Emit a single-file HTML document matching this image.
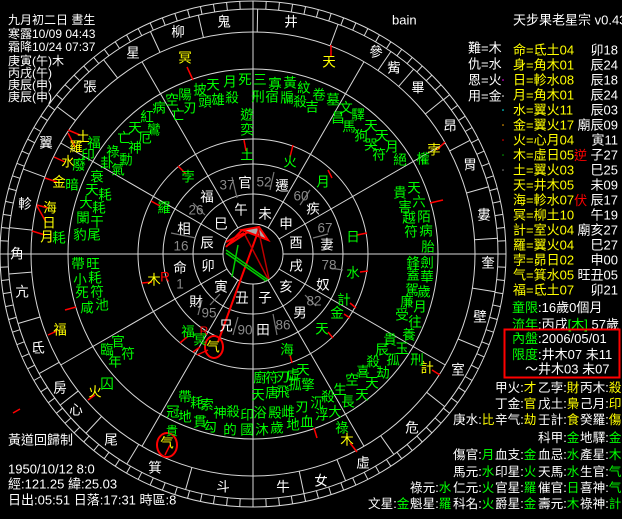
<!DOCTYPE html>
<html><head><meta charset="utf-8"><style>
html,body{margin:0;padding:0;background:#000;width:622px;height:519px;overflow:hidden}
svg{display:block}
text{font-family:"Liberation Sans","Noto Sans CJK TC","WenQuanYi Zen Hei",sans-serif;dominant-baseline:central}
.w{fill:#fff;font-size:13px}
.h{fill:#fff;font-size:12px}
.g{fill:#0f0;font-size:13.5px;text-anchor:middle}
.y{fill:#ff0;font-size:13.5px;text-anchor:middle}
.m{fill:#fff;font-size:13.5px;text-anchor:middle}
.n{fill:#8a8a8a;font-size:13.5px;text-anchor:middle}
.t{font-size:13px}
.t2{font-size:12.6px}
.yy{fill:#ff0}.gg{fill:#0f0}.rr{fill:#f00}.ww{fill:#fff}
</style></head><body>
<svg id="s" width="622" height="519" viewBox="0 0 622 519" xmlns="http://www.w3.org/2000/svg">
<g id="lines" stroke="#d8d8d8" stroke-width="1" fill="none">
<circle cx="253" cy="254" r="253"/>
<circle cx="253" cy="254" r="245"/>
<circle cx="253" cy="254" r="222"/>
<circle cx="253" cy="254" r="185"/>
<circle cx="253" cy="254" r="115"/>
<circle cx="253" cy="254" r="90"/>
<circle cx="253" cy="254" r="60"/>
<circle cx="253" cy="254" r="30"/>
</g>
<g stroke="#f00" stroke-width="1.5">
<line x1="187" y1="67" x2="193" y2="80"/>
<line x1="68" y1="130" x2="80" y2="135"/>
<line x1="68" y1="133" x2="75" y2="147"/>
<line x1="54" y1="157" x2="65" y2="162"/>
<line x1="45" y1="178" x2="57" y2="182"/>
<line x1="37" y1="205" x2="48" y2="208"/>
<line x1="37" y1="206" x2="46" y2="222"/>
<line x1="32" y1="231" x2="45" y2="235"/>
<line x1="178" y1="166" x2="186" y2="174"/>
<line x1="151" y1="201" x2="160" y2="206"/>
<line x1="244" y1="140" x2="246" y2="151"/>
<line x1="293" y1="145" x2="290" y2="157"/>
<line x1="331" y1="45" x2="331" y2="57"/>
<line x1="328" y1="170" x2="332" y2="178"/>
<line x1="357" y1="235" x2="367" y2="233"/>
<line x1="430" y1="203" x2="443" y2="200"/>
<line x1="437" y1="150" x2="445" y2="142"/>
<line x1="360" y1="272" x2="368" y2="271"/>
<line x1="350" y1="303" x2="356" y2="308"/>
<line x1="344" y1="314" x2="350" y2="318"/>
<line x1="328" y1="332" x2="333" y2="338"/>
<line x1="290" y1="355" x2="292" y2="363"/>
<line x1="432" y1="370" x2="440" y2="375"/>
<line x1="350" y1="443" x2="357" y2="452"/>
<line x1="314" y1="428" x2="317" y2="438"/>
<line x1="88" y1="400" x2="95" y2="395"/>
<line x1="48" y1="335" x2="57" y2="331"/>
<line x1="65" y1="310" x2="76" y2="307"/>
<line x1="142" y1="283" x2="152" y2="282"/>
<line x1="180" y1="343" x2="187" y2="337"/>
<line x1="193" y1="352" x2="200" y2="347"/>
<line x1="197" y1="355" x2="208" y2="350"/>
<line x1="165" y1="455" x2="170" y2="445"/>
<line x1="13" y1="413" x2="20" y2="409"/>
</g>
<g stroke="#777" stroke-width="1.2">
<line x1="232" y1="177" x2="237" y2="198"/>
<line x1="274" y1="172" x2="270" y2="190"/>
<line x1="193" y1="203" x2="205" y2="215"/>
<line x1="171" y1="233" x2="196" y2="238"/>
<line x1="310" y1="190" x2="300" y2="205"/>
<line x1="313" y1="238" x2="328" y2="234"/>
<line x1="305" y1="295" x2="316" y2="306"/>
<line x1="273" y1="314" x2="277" y2="335"/>
<line x1="238" y1="317" x2="233" y2="335"/>
<line x1="202" y1="300" x2="198" y2="315"/>
<line x1="330" y1="268" x2="343" y2="270"/>
<line x1="220" y1="294" x2="210" y2="305"/>
</g>
<polygon points="242,230 259,227 268,240" fill="#aaa" stroke="#f00" stroke-width="2"/>
<g stroke="#f00" stroke-width="2">
<line x1="242" y1="230" x2="226" y2="247"/>
<line x1="248" y1="232" x2="228" y2="245"/>
<line x1="244" y1="233" x2="226" y2="242"/>
<line x1="259" y1="229" x2="218" y2="342"/>
</g>
<g stroke="#b00" stroke-width="1.5">
<line x1="258" y1="228" x2="269" y2="279"/>
<line x1="245" y1="235" x2="268" y2="279"/>
</g>
<g stroke="#0c0" stroke-width="1.5">
<line x1="226" y1="250" x2="268" y2="280"/>
<line x1="226" y1="253" x2="266" y2="281"/>
<line x1="238" y1="245" x2="232" y2="277"/>
</g>
<ellipse cx="214" cy="347" rx="9" ry="11" fill="none" stroke="#f00" stroke-width="2"/>
<ellipse cx="167" cy="445" rx="10" ry="12" fill="none" stroke="#f00" stroke-width="2"/>

<g class="m">
<text x="224" y="22">鬼</text><text x="291" y="22">井</text><text x="376" y="52">參</text>
<text x="394" y="68">觜</text><text x="418" y="88">畢</text><text x="450" y="126">昂</text>
<text x="470" y="165">胃</text><text x="484" y="215">婁</text><text x="488" y="263">奎</text>
<text x="480" y="317">壁</text><text x="458" y="370">室</text><text x="412" y="428">危</text>
<text x="363" y="463">虛</text><text x="321" y="481">女</text><text x="283" y="487">牛</text>
<text x="223" y="487">斗</text><text x="155" y="468">箕</text><text x="111" y="440">尾</text>
<text x="76" y="410">心</text><text x="60" y="388">房</text><text x="38" y="348">氐</text>
<text x="22" y="292">亢</text><text x="17" y="254">角</text><text x="25" y="204">軫</text>
<text x="46" y="143">翼</text><text x="90" y="87">張</text><text x="133" y="53">星</text>
<text x="178" y="32">柳</text>
</g>
<g class="m">
<text x="241" y="210">午</text><text x="265" y="214">未</text><text x="286" y="224">申</text>
<text x="296" y="243">酉</text><text x="296" y="266">戌</text><text x="286" y="287">亥</text>
<text x="265" y="298">子</text><text x="242" y="298">丑</text><text x="221" y="287">寅</text>
<text x="208" y="266">卯</text><text x="207" y="243">辰</text><text x="221" y="224">巳</text>
<text x="245" y="183">官</text><text x="282" y="186">遷</text><text x="313" y="209">疾</text>
<text x="327" y="245">妻</text><text x="323" y="285">奴</text><text x="300" y="313">男</text>
<text x="263" y="330">田</text><text x="226" y="326">兄</text><text x="196" y="302">財</text>
<text x="180" y="268">命</text><text x="184" y="229">相</text><text x="207" y="197">福</text>
</g>
<g class="n">
<text x="227" y="185">37</text><text x="264" y="182">52</text><text x="301" y="196">60</text>
<text x="325" y="228">67</text><text x="329" y="265">78</text><text x="314" y="301">82</text>
<text x="283" y="325">86</text><text x="245" y="330">90</text><text x="209" y="313">95</text>
<text x="180" y="284">1</text><text x="181" y="246">16</text><text x="196" y="210">26</text>
</g>
<g class="y">
<text x="185" y="58">冥</text><text x="83" y="137">土</text><text x="76" y="147">羅</text>
<text x="68" y="162">水</text><text x="59" y="182">金</text><text x="50" y="208">海</text>
<text x="49" y="223">日</text><text x="47" y="237">月</text><text x="329" y="62">天</text>
<text x="434" y="150">孛</text><text x="427" y="368">計</text><text x="347" y="440">木</text>
<text x="154" y="280">木</text><text x="60" y="330">福</text><text x="95" y="392">火</text>
<text x="213" y="347">气</text><text x="167" y="443">气</text>
</g>
<text x="165" y="277" class="g" style="fill:#f00">R</text>
<text x="204" y="331" class="g" style="fill:#f00;font-size:12px">R</text>
<g class="g">
<text x="213" y="85">天</text><text x="230" y="82">月</text><text x="245" y="80">死</text>
<text x="200" y="90">披</text><text x="185" y="95">陽</text><text x="205" y="102">頭</text>
<text x="218" y="100">雄</text><text x="232" y="98">殺</text><text x="172" y="100">空</text>
<text x="190" y="108">刃</text><text x="178" y="115">亡</text><text x="159" y="108">病</text>
<text x="147" y="117">紅</text><text x="135" y="128">天</text><text x="154" y="130">鸞</text>
<text x="124" y="138">亡</text><text x="145" y="138">厄</text><text x="135" y="148">神</text>
<text x="113" y="152">祿</text><text x="126" y="160">勳</text><text x="107" y="163">卦</text>
<text x="118" y="170">氣</text><text x="94" y="143">福</text><text x="88" y="155">印</text>
<text x="79" y="165">廢</text><text x="72" y="185">暗</text><text x="97" y="177">衰</text>
<text x="92" y="190">天</text><text x="105" y="195">耗</text><text x="86" y="203">大</text>
<text x="99" y="208">耗</text><text x="83" y="218">闌</text><text x="97" y="222">干</text>
<text x="80" y="235">豹</text><text x="94" y="235">尾</text><text x="59" y="238">耗</text>
<text x="247" y="115">遊</text><text x="247" y="130">奕</text><text x="247" y="155">土</text>
<text x="290" y="162">火</text><text x="188" y="177">孛</text><text x="164" y="208">羅</text>
<text x="260" y="80">三</text><text x="275" y="84">寡</text><text x="290" y="83">黃</text>
<text x="304" y="88">紋</text><text x="319" y="95">卷</text><text x="258" y="97">刑</text>
<text x="272" y="97">宿</text><text x="287" y="98">牖</text><text x="300" y="102">殺</text>
<text x="312" y="107">吉</text>
<text x="333" y="100">墓</text><text x="346" y="108">文</text><text x="358" y="115">驛</text>
<text x="338" y="118">昌</text><text x="349" y="127">馬</text><text x="371" y="126">天</text>
<text x="361" y="136">狗</text><text x="382" y="136">天</text><text x="371" y="145">哭</text>
<text x="392" y="147">月</text><text x="379" y="155">符</text><text x="400" y="160">絕</text>
<text x="423" y="159">權</text><text x="323" y="182">月</text><text x="414" y="188">天</text>
<text x="400" y="193">貴</text><text x="419" y="202">六</text><text x="405" y="207">害</text>
<text x="424" y="217">陌</text><text x="409" y="218">越</text><text x="426" y="231">病</text>
<text x="411" y="232">符</text><text x="428" y="247">胎</text><text x="353" y="237">日</text>
<text x="413" y="263">鋒</text><text x="427" y="263">劍</text><text x="413" y="275">蓋</text>
<text x="427" y="277">華</text><text x="412" y="290">駕</text><text x="424" y="292">歲</text>
<text x="407" y="302">廉</text><text x="420" y="307">月</text><text x="402" y="315">受</text>
<text x="415" y="322">往</text><text x="409" y="335">養</text><text x="390" y="340">貴</text>
<text x="402" y="349">玉</text><text x="382" y="350">辰</text><text x="393" y="360">孤</text>
<text x="373" y="362">殺</text><text x="417" y="360">刑</text><text x="383" y="373">劫</text>
<text x="363" y="372">喜</text><text x="372" y="383">天</text><text x="352" y="380">空</text>
<text x="362" y="395">天</text><text x="340" y="390">生</text><text x="348" y="402">長</text>
<text x="328" y="397">殺</text><text x="335" y="412">大</text><text x="317" y="403">沉</text>
<text x="322" y="415">浮</text><text x="302" y="407">刃</text><text x="307" y="422">血</text>
<text x="293" y="425">地</text><text x="288" y="412">雌</text><text x="275" y="413">殿</text>
<text x="277" y="428">歲</text><text x="262" y="430">沐</text><text x="260" y="413">浴</text>
<text x="258" y="395">天</text><text x="272" y="393">唐</text><text x="283" y="392">飛</text>
<text x="295" y="385">孤</text><text x="308" y="385">擎</text><text x="260" y="378">廚</text>
<text x="272" y="378">符</text><text x="283" y="377">刃</text><text x="293" y="375">虛</text>
<text x="303" y="370">天</text><text x="342" y="428">祿</text>
<text x="353" y="273">水</text><text x="344" y="300">計</text><text x="337" y="313">金</text>
<text x="322" y="329">天</text><text x="287" y="350">海</text>
<text x="78" y="264">帶</text><text x="93" y="264">旺</text><text x="80" y="280">小</text>
<text x="95" y="278">耗</text><text x="82" y="293">死</text><text x="97" y="292">符</text>
<text x="87" y="308">咸</text><text x="102" y="305">池</text>
<text x="118" y="342">官</text><text x="107" y="350">臨</text><text x="128" y="354">符</text>
<text x="115" y="362">年</text><text x="107" y="384">囚</text>
<text x="188" y="332">福</text><text x="200" y="340">冥</text>
<text x="185" y="397">帶</text><text x="173" y="412">冠</text><text x="197" y="403">耗</text>
<text x="185" y="417">地</text><text x="207" y="405">索</text><text x="200" y="422">貫</text>
<text x="220" y="413">神</text><text x="210" y="427">勾</text><text x="233" y="412">殺</text>
<text x="230" y="430">的</text><text x="247" y="415">印</text><text x="247" y="430">國</text>
<text x="172" y="431" style="font-size:12px">貴</text>
</g>

<g class="h">
<text x="8" y="20">九月初二日 晝生</text>
<text x="8" y="34">寒露10/09 04:43</text>
<text x="8" y="47">霜降10/24 07:37</text>
<text x="8" y="61">庚寅(午)木</text>
<text x="8" y="73">丙戌(午)</text>
<text x="8" y="85">庚辰(申)</text>
<text x="8" y="97">庚辰(申)</text>
</g>
<g class="w">
<text x="8" y="440">黃道回歸制</text>
<text x="8" y="469">1950/10/12 8:0</text>
<text x="8" y="484">經:121.25 緯:25.03</text>
<text x="8" y="500">日出:05:51 日落:17:31 時區:8</text>
<text x="392" y="20">bain</text>
<text x="513" y="20">天步果老星宗 v0.43</text>
<text x="468" y="48">難=木</text>
<text x="468" y="64">仇=水</text>
<text x="468" y="80">恩=火</text>
<text x="468" y="96">用=金</text>
</g>
<g>
<circle cx="503" cy="80" r="0.8" fill="#f0f"/><circle cx="503" cy="96" r="0.8" fill="#fff"/>
<circle cx="503" cy="110" r="0.8" fill="#0ff"/><circle cx="503" cy="125" r="0.8" fill="#fa0"/>
<circle cx="503" cy="140" r="0.8" fill="#f00"/><circle cx="503" cy="155" r="0.8" fill="#0a0"/>
<circle cx="503" cy="170" r="0.8" fill="#888"/>
</g>
<g class="t">
<text x="513" y="50" class="yy">命=氐土04</text><text x="618" y="50" class="ww" text-anchor="end">卯18</text>
<text x="513" y="65" class="yy">身=角木01</text><text x="618" y="65" class="ww" text-anchor="end">辰24</text>
<text x="513" y="80" class="yy">日=軫水08</text><text x="618" y="80" class="ww" text-anchor="end">辰18</text>
<text x="513" y="95" class="yy">月=角木01</text><text x="618" y="95" class="ww" text-anchor="end">辰24</text>
<text x="513" y="110" class="yy">水=翼火11</text><text x="618" y="110" class="ww" text-anchor="end">辰03</text>
<text x="513" y="125" class="yy">金=翼火17</text><text x="618" y="125" class="ww" text-anchor="end">廟辰09</text>
<text x="513" y="140" class="yy">火=心月04</text><text x="618" y="140" class="ww" text-anchor="end">寅11</text>
<text x="513" y="155" class="yy">木=虛日05<tspan class="rr">逆</tspan></text><text x="618" y="155" class="ww" text-anchor="end">子27</text>
<text x="513" y="170" class="yy">土=翼火03</text><text x="618" y="170" class="ww" text-anchor="end">巳25</text>
<text x="513" y="185" class="yy">天=井木05</text><text x="618" y="185" class="ww" text-anchor="end">未09</text>
<text x="513" y="200" class="yy">海=軫水07<tspan class="rr">伏</tspan></text><text x="618" y="200" class="ww" text-anchor="end">辰17</text>
<text x="513" y="215" class="yy">冥=柳土10</text><text x="618" y="215" class="ww" text-anchor="end">午19</text>
<text x="513" y="230" class="yy">計=室火04</text><text x="618" y="230" class="ww" text-anchor="end">廟亥27</text>
<text x="513" y="245" class="yy">羅=翼火04</text><text x="618" y="245" class="ww" text-anchor="end">巳27</text>
<text x="513" y="260" class="yy">孛=昴日02</text><text x="618" y="260" class="ww" text-anchor="end">申00</text>
<text x="513" y="275" class="yy">气=箕水05</text><text x="618" y="275" class="ww" text-anchor="end">旺丑05</text>
<text x="513" y="290" class="yy">福=氐土07</text><text x="618" y="290" class="ww" text-anchor="end">卯21</text>
<text x="512" y="307"><tspan class="gg">童限</tspan><tspan class="ww">:16歲0個月</tspan></text>
<text x="512" y="324"><tspan class="gg">流年</tspan><tspan class="ww">:丙戌</tspan><tspan class="gg">[木]</tspan><tspan class="ww">  57歲</tspan></text>
<text x="512" y="338"><tspan class="gg">內盤</tspan><tspan class="ww">:2006/05/01</tspan></text>
<text x="512" y="354"><tspan class="gg">限度</tspan><tspan class="ww">:井木07  未11</tspan></text>
<text x="525" y="369" class="ww">～井木03  未07</text>
</g>
<rect x="504.5" y="329.5" width="115" height="48" fill="none" stroke="#f00" stroke-width="2"/>
<g class="t2">
<text x="495" y="388"><tspan class="ww">甲火:</tspan><tspan class="yy">才</tspan></text>
<text x="538" y="388"><tspan class="ww">乙孛:</tspan><tspan class="yy">財</tspan></text>
<text x="580" y="388"><tspan class="ww">丙木:</tspan><tspan class="yy">殺</tspan></text>
<text x="495" y="404"><tspan class="ww">丁金:</tspan><tspan class="yy">官</tspan></text>
<text x="538" y="404"><tspan class="ww">戊土:</tspan><tspan class="yy">梟</tspan></text>
<text x="580" y="404"><tspan class="ww">己月:</tspan><tspan class="yy">印</tspan></text>
<text x="453" y="420"><tspan class="ww">庚水:</tspan><tspan class="yy">比</tspan></text>
<text x="495" y="420"><tspan class="ww">辛气:</tspan><tspan class="yy">劫</tspan></text>
<text x="538" y="420"><tspan class="ww">壬計:</tspan><tspan class="yy">食</tspan></text>
<text x="580" y="420"><tspan class="ww">癸羅:</tspan><tspan class="yy">傷</tspan></text>
<text x="538" y="438"><tspan class="ww">科甲:</tspan><tspan class="gg">金</tspan></text>
<text x="580" y="438"><tspan class="ww">地驛:</tspan><tspan class="gg">金</tspan></text>
<text x="453" y="455"><tspan class="ww">傷官:</tspan><tspan class="gg">月</tspan></text>
<text x="495" y="455"><tspan class="ww">血支:</tspan><tspan class="gg">金</tspan></text>
<text x="538" y="455"><tspan class="ww">血忌:</tspan><tspan class="gg">水</tspan></text>
<text x="580" y="455"><tspan class="ww">產星:</tspan><tspan class="gg">木</tspan></text>
<text x="453" y="472"><tspan class="ww">馬元:</tspan><tspan class="gg">水</tspan></text>
<text x="495" y="472"><tspan class="ww">印星:</tspan><tspan class="gg">火</tspan></text>
<text x="538" y="472"><tspan class="ww">天馬:</tspan><tspan class="gg">水</tspan></text>
<text x="580" y="472"><tspan class="ww">生官:</tspan><tspan class="gg">气</tspan></text>
<text x="410" y="488"><tspan class="ww">祿元:</tspan><tspan class="gg">水</tspan></text>
<text x="453" y="488"><tspan class="ww">仁元:</tspan><tspan class="gg">火</tspan></text>
<text x="495" y="488"><tspan class="ww">官星:</tspan><tspan class="gg">羅</tspan></text>
<text x="538" y="488"><tspan class="ww">催官:</tspan><tspan class="gg">日</tspan></text>
<text x="580" y="488"><tspan class="ww">喜神:</tspan><tspan class="gg">气</tspan></text>
<text x="368" y="504"><tspan class="ww">文星:</tspan><tspan class="gg">金</tspan></text>
<text x="410" y="504"><tspan class="ww">魁星:</tspan><tspan class="gg">羅</tspan></text>
<text x="453" y="504"><tspan class="ww">科名:</tspan><tspan class="gg">火</tspan></text>
<text x="495" y="504"><tspan class="ww">爵星:</tspan><tspan class="gg">金</tspan></text>
<text x="538" y="504"><tspan class="ww">壽元:</tspan><tspan class="gg">木</tspan></text>
<text x="580" y="504"><tspan class="ww">祿神:</tspan><tspan class="gg">計</tspan></text>
</g>
</svg>
<script>
(function(){
var NS="http://www.w3.org/2000/svg",L=document.getElementById("lines"),cx=253,cy=254;
function ln(a,r1,r2){var t=a*Math.PI/180,e=document.createElementNS(NS,"line");
e.setAttribute("x1",cx+r1*Math.cos(t));e.setAttribute("y1",cy-r1*Math.sin(t));
e.setAttribute("x2",cx+r2*Math.cos(t));e.setAttribute("y2",cy-r2*Math.sin(t));L.appendChild(e);}
for(var a=0;a<360;a+=30){ln(a,30,(a%90==0)?253:222);}
for(var a=0;a<360;a+=3){ln(a,245,253);}
var P=[[224,22],[291,22],[376,52],[394,68],[418,88],[450,126],[470,165],[484,215],[488,263],[480,317],[458,370],[412,428],[363,463],[321,481],[283,487],[223,487],[155,468],[111,440],[76,410],[60,388],[38,348],[22,292],[17,254],[25,204],[46,143],[90,87],[133,53],[178,32]];
var A=P.map(function(p){var v=Math.atan2(cy-p[1],p[0]-cx)*180/Math.PI;return (v+360)%360;}).sort(function(a,b){return a-b});
for(var i=0;i<A.length;i++){var b=A[(i+1)%A.length];if(b<A[i])b+=360;ln((A[i]+b)/2,222,245);}
})();
</script>
</body></html>
